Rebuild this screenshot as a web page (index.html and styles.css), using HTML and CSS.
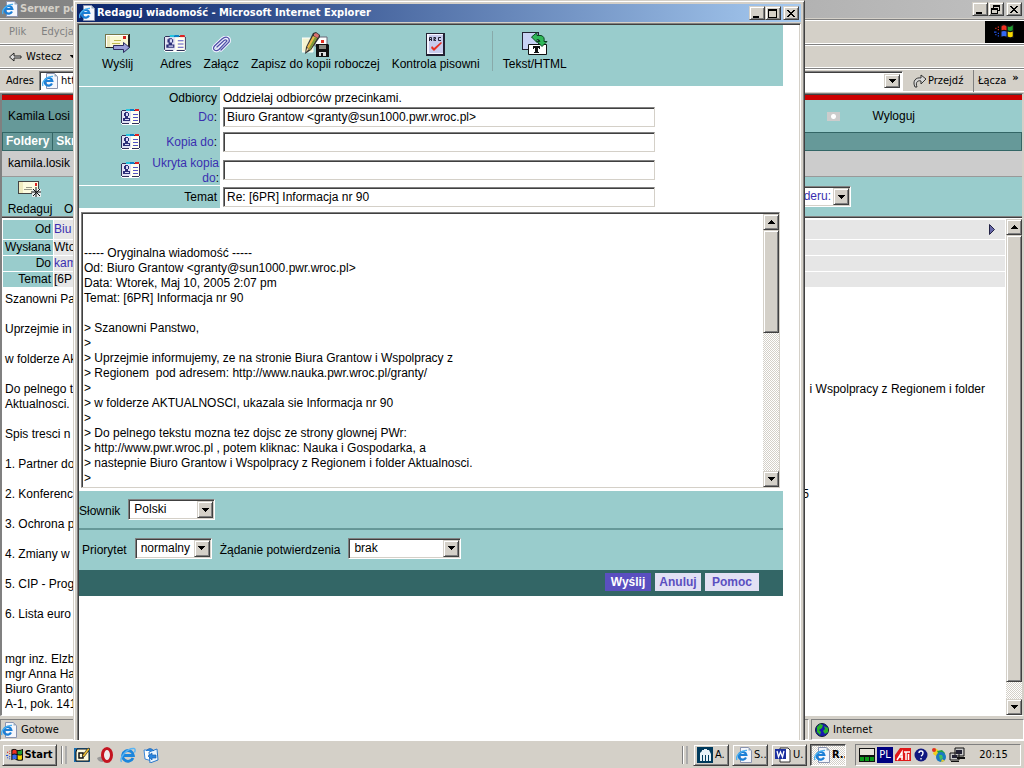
FILE: index.html
```html
<!DOCTYPE html>
<html lang="pl">
<head>
<meta charset="utf-8">
<title>Redaguj wiadomość</title>
<link rel="stylesheet" href="styles.css">
</head>
<body>
<svg class="defs" aria-hidden="true">
  <symbol id="ie" viewBox="0 0 16 16">
    <path d="M4.500 .5h8l3 3v12h-11z" fill="#f4f6fc" stroke="#8a94b0"/>
    <path d="M12.500 .5v3h3z" fill="#9ab"/>
    <path d="M10 10.500A3.800 3.800 0 1 1 10.300 8H4" fill="none" stroke="#1c7fd6" stroke-width="2.200"/>
    <path d="M1 13C-1 9 5 3 11 3.500" fill="none" stroke="#4ab0f0" stroke-width="1.300"/>
  </symbol>
  <symbol id="ie-bare" viewBox="0 0 16 16">
    <path d="M13 11A5.4 5.4 0 1 1 13.4 8.5H4" fill="none" stroke="#1c86dc" stroke-width="2.8"/>
    <path d="M1.500 15C-1 11 7 1 14 1.500q2 .5 .5 4" fill="none" stroke="#58b4f4" stroke-width="1.400"/>
  </symbol>
  <symbol id="down" viewBox="0 0 7 4"><path d="M0 0h7v1H6v1H5v1H4v1H3V3H2V2H1V1H0z"/></symbol>
  <symbol id="up" viewBox="0 0 7 4"><path d="M0 4h7V3H6V2H5V1H4V0H3v1H2v1H1v1H0z"/></symbol>
  <symbol id="min" viewBox="0 0 10 10"><path d="M1 7h6v2H1z"/></symbol>
  <symbol id="max" viewBox="0 0 10 10"><path d="M0 0h9v9H0zM1 2v6h7V2z" fill-rule="evenodd"/></symbol>
  <symbol id="restore" viewBox="0 0 10 10"><path d="M2 0h7v6H7V5h1V2H3v1H2zM0 3h7v6H0zM1 5v3h5V5z" fill-rule="evenodd"/></symbol>
  <symbol id="close" viewBox="0 0 10 10"><path d="M1 1h2v1h1v1h2V2h1V1h2v1H8v1H7v1H6v1h1v1h1v1h1v1H7V7H6V6H4v1H3v1H1V7h1V6h1V5h1V4H3V3H2V2H1z"/></symbol>
  <symbol id="card" viewBox="0 0 20 17">
    <path d="M1 2h18v13h-1v1H1v-1H0V3h1z" fill="#fff"/>
    <path d="M1 1h17v1H1zM0 2h1v12H0zM18 2h1v12h-1zM1 14h7v1H1zM11 14h7v1h-7z" fill="#30305a"/>
    <path d="M1 2h9v12H1z" fill="#e2e3f4"/><path d="M10 2h8v12h-8z" fill="#fffff0"/>
    <path d="M5 0h4v2H5z" fill="#26c6e0"/><path d="M9 0h4v2H9z" fill="#0a80c8"/><path d="M14 0h4v2h-4z" fill="#e02020"/>
    <path d="M4 3h3v1h1v3H7v2h2v3H2V9h2V7H3V4h1z" fill="#2c2f78"/>
    <path d="M5 4h2v3H5zM4 10h4v1H4z" fill="#d8daf5"/>
    <path d="M12 5h5v1h-5zM12 8h5v1h-5zM12 11h5v1h-5z" fill="#5455c4"/>
  </symbol>
  <symbol id="flag" viewBox="0 0 16 12">
    <path d="M5 1q3-2 5 0 3 1 6-1v11q-3 1-6 0-2-2-5 0z" fill="#111"/>
    <path d="M6 2q2-2 4 0v3q-2-1-4 0z" fill="#f03020"/><path d="M11 2q2 1 4-1v4q-2 1-4 0z" fill="#20a030"/>
    <path d="M6 6q2-1 4 0v4q-2-1-4 0z" fill="#3468f0"/><path d="M11 6q2 1 4 0v4q-2 1-4 0z" fill="#f8d800"/>
    <path d="M3 2h1v1H3zM3 4h1v1H3zM1 3h1v1H1z" fill="#e03020"/><path d="M3 7h1v1H3zM3 9h1v1H3zM1 8h1v1H1zM0 6h2v1H0z" fill="#2050e0"/>
  </symbol>
</svg>

<div class="desktop">
  <div class="workspace">
    <main class="browser">
      <header class="titlebar inactive">
        <svg class="ico16"><use href="#ie"/></svg><span class="title">Serwer po</span>
        <div class="winbtns">
          <button aria-label="Minimalizuj"><svg><use href="#min"/></svg></button><button aria-label="Przywróć"><svg><use href="#restore"/></svg></button><button class="x" aria-label="Zamknij"><svg><use href="#close"/></svg></button>
        </div>
      </header>
      <nav class="bar menu"><span>Plik</span><span>Edycja</span>
        <span class="brand"><svg viewBox="0 0 16 12"><use href="#flag"/></svg></span>
      </nav>
      <div class="bar tools">
        <svg class="back" viewBox="0 0 13 10"><path d="M.5 5 5 1v3h7v2H5v3z" fill="#ddd" stroke="#222"/></svg>
        <span>Wstecz</span><svg class="tri"><use href="#down"/></svg>
      </div>
      <div class="bar address">
        <label for="url">Adres</label>
        <div class="urlbox"><svg class="ico16"><use href="#ie"/></svg><input id="url" value="htt"><button class="arrow" aria-label="Lista adresów"><svg><use href="#down"/></svg></button></div>
        <button class="go"><svg viewBox="0 0 14 14"><path d="M2 13C-1 7 3 3 8 4V1l5 4-5 5V7C5 6 2 8 4 13z" fill="#d8d8d8" stroke="#333"/></svg>Przejdź</button>
        <span class="links">Łącza<b>»</b></span>
      </div>
      <section class="page">
        <div class="redline"></div>
        <div class="userbar"><span class="user">Kamila Losi</span><div class="userright"><i class="radio"></i><a href="#">Wyloguj</a></div></div>
        <div class="tabs"><b>Foldery</b><b>Skr</b></div>
        <div class="folder">kamila.losik</div>
        <div class="actions">
          <div class="compose"><svg viewBox="0 0 24 17"><path d="M0 0h21v13H0z" fill="#444"/><path d="M1 1h19v11H1z" fill="#fdfce0"/><path d="M1 1h4v11H1z" fill="#f0ecc0"/><path d="M17 2h2v3h-2z" fill="#d22"/><path d="M8 6h6v1H8zM6 8h10v1H6z" fill="#998"/><path d="M14 8h9v8h-9z" fill="#e6eded"/><path d="M18 6v10M13 11h10M15 8l7 7M22 8l-7 7" stroke="#111"/></svg>Redaguj</div>
          <span class="reply">O</span>
          <div class="combo moveto"><select aria-label="Przenieś do folderu"><option>deru:</option></select><span class="arrow"><svg><use href="#down"/></svg></span></div>
        </div>
        <div class="message">
          <div class="msgbody">
            <table class="heads">
              <tr><th>Od</th><td><a href="#">Biu</a><svg class="next" viewBox="0 0 6 11"><path d="M.5 .5 5.500 5.500 .5 10.500z" fill="#6667a8" stroke="#224"/></svg></td></tr>
              <tr><th>Wysłana</th><td>Wto</td></tr>
              <tr><th>Do</th><td><a href="#">kam</a></td></tr>
              <tr><th>Temat</th><td>[6P</td></tr>
            </table>
            <div class="letter">
              <p>Szanowni Pa</p>
              <p>Uprzejmie in</p>
              <p>w folderze Ak</p>
              <p class="split"><span>Do pelnego t<br>Aktualnosci.</span><span>i Wspolpracy z Regionem i folder</span></p>
              <p>Spis tresci n</p>
              <p>1. Partner do</p>
              <p class="split far"><span>2. Konferenc</span><span>5</span></p>
              <p>3. Ochrona p</p>
              <p>4. Zmiany w</p>
              <p>5. CIP - Prog</p>
              <p>6. Lista euro</p>
              <p class="sign">mgr inz. Elzb<br>mgr Anna Ha<br>Biuro Granto<br>A-1, pok. 141</p>
            </div>
          </div>
          <div class="scroll"><span class="sb"><svg><use href="#up"/></svg></span><span class="thumb long"></span><span class="track"></span><span class="sb"><svg><use href="#down"/></svg></span></div>
        </div>
      </section>
      <footer class="status">
        <div class="cell ready"><svg class="ico16"><use href="#ie"/></svg>Gotowe</div>
        <div class="cell zone"><svg viewBox="0 0 14 14"><circle cx="7" cy="7" r="6.500" fill="#1818b0" stroke="#123"/><path d="M2 4 5 1l3 1-1 3-3 2 2 2-1 3-3-3zM9 3l4 2v4l-3 2-2-3 2-2z" fill="#28b428"/></svg>Internet</div>
      </footer>
    </main>

    <section class="popup">
      <header class="titlebar active">
        <svg class="ico16"><use href="#ie"/></svg><span class="title">Redaguj wiadomość - Microsoft Internet Explorer</span>
        <div class="winbtns">
          <button aria-label="Minimalizuj"><svg><use href="#min"/></svg></button><button aria-label="Maksymalizuj"><svg><use href="#max"/></svg></button><button class="x" aria-label="Zamknij"><svg><use href="#close"/></svg></button>
        </div>
      </header>
      <form class="client">
        <div class="toolbar">
          <button type="button" class="wide"><svg width="26" height="20" viewBox="0 0 26 20"><path d="M0 0h25v14H0z" fill="#222"/><path d="M0 0h24v1H0zM0 0h1v14H0z" fill="#77774a"/><path d="M1 1h22v12H1z" fill="#fff"/><path d="M2 2h21v11H2z" fill="#f9f8d4"/><path d="M2 2h3v11H2z" fill="#ece8bc"/><path d="M18 2h3v3h-3z" fill="#d22020"/><path d="M9 6h7v1H9zM7 9h8v1H7z" fill="#c0bc50"/><path d="M8.500 11.500h10v-3l6 5-6 5v-3h-10z" fill="#9a9ed8" stroke="#2b2b60"/></svg>Wyślij</button>
          <button type="button"><svg width="23" height="18" viewBox="0 0 20 17" preserveAspectRatio="none"><use href="#card"/></svg>Adres</button>
          <button type="button"><svg width="20" height="17" viewBox="0 0 20 17"><g fill="none" stroke-linecap="round"><path id="clip" d="M6 11 13 4.500q2-1.500 3 .5L8 13.500q-2.500 2-4.500 .5t0-4L11 3q3-2.500 5.500-1.500T18 6l-8 8" stroke="#f0f0ff" stroke-width="3"/><use href="#clip"/><path d="M6 11 13 4.500q2-1.500 3 .5L8 13.500q-2.500 2-4.500 .5t0-4L11 3q3-2.500 5.500-1.500T18 6l-8 8" stroke="#5052a8" stroke-width="1.300"/></g></svg>Załącz</button>
          <button type="button"><svg width="27" height="25" viewBox="0 0 27 25"><path d="M0 6h11v14H0z" fill="#f5f4d0" stroke="#fff"/><path d="M13 5h12v9H13z" fill="#fff" stroke="#667"/><path d="M19 8h3v3h-3z" fill="#e03020"/><path d="M3 22l1-7L11 1l3-1 4 3v2L9 18z" fill="#333"/><path d="M5 15 11 4l4 2-7 12z" fill="#e8b848"/><path d="M7 16 13 5l2 1-7 12z" fill="#7a9a38"/><path d="M12 2l2-1 3 2-1 3-4-2z" fill="#d87070"/><path d="M4 20l1-4 2 1z" fill="#f8d8a0"/><path d="M14 12h12l1 1v12H14z" fill="#111"/><path d="M17 13h7v4h-7z" fill="#8a8a80"/><path d="M17 20h7v4h-7z" fill="#ddd"/><path d="M19 21h2v3h-2z" fill="#111"/></svg>Zapisz do kopii roboczej</button>
          <button type="button"><svg width="19" height="23" viewBox="0 0 19 23"><path d="M0 0h19v23H0z" fill="#223"/><path d="M1 1h16v20H1z" fill="#f4f4ff"/><path d="M3 2h14v18H3z" fill="#c8ccec"/><path d="M3.500 8V4.500h2V8M4 6.500h1M8 4.500h1.500V6H8.500v1.500H10M8 4v4M15 4.500h-2.500v3H15" fill="none" stroke="#223"/><path d="M5 15l3 3 8-8-1-1-7 6-2-2z" fill="#e83020"/></svg>Kontrola pisowni</button>
          <span class="sep"></span>
          <button type="button"><svg width="26" height="24" viewBox="0 0 26 24"><path d="M0 0h17v18H0z" fill="#223"/><path d="M1 1h15v16H1z" fill="#c8d2f4"/><path d="M6.500 12.500h18v10h-18z" fill="#fff" stroke="#111"/><path d="M11 14h7v3h-1v-1h-1v4h1v1h-5v-1h1v-4h-1v1h-1z" fill="#111"/><path d="M9.500 5 15 .5v3h4q4 1 3 6h3l-5 5-5-5h3q0-2-3-2v3z" fill="#2fb858" stroke="#0a4422"/></svg>Tekst/HTML</button>
        </div>
        <div class="fields">
          <div class="row first"><span class="lab">Odbiorcy</span><span class="hint">Oddzielaj odbiorców przecinkami.</span></div>
          <div class="row"><label class="lab" for="to"><svg class="card"><use href="#card"/></svg><a href="#">Do</a>:</label><input id="to" value="Biuro Grantow &lt;granty@sun1000.pwr.wroc.pl&gt;"></div>
          <div class="row mid"><label class="lab" for="cc"><svg class="card"><use href="#card"/></svg><a href="#">Kopia do</a>:</label><input id="cc"></div>
          <div class="row tall"><label class="lab" for="bcc"><svg class="card"><use href="#card"/></svg><span><a href="#">Ukryta kopia<br>do</a>:</span></label><input id="bcc"></div>
          <div class="row subject"><label class="lab" for="subj">Temat</label><input id="subj" value="Re: [6PR] Informacja nr 90"></div>
        </div>
        <div class="editor">
          <textarea aria-label="Treść wiadomości" wrap="off">


----- Oryginalna wiadomość -----
Od: Biuro Grantow &lt;granty@sun1000.pwr.wroc.pl&gt;
Data: Wtorek, Maj 10, 2005 2:07 pm
Temat: [6PR] Informacja nr 90

&gt; Szanowni Panstwo,
&gt;
&gt; Uprzejmie informujemy, ze na stronie Biura Grantow i Wspolpracy z
&gt; Regionem  pod adresem: http://www.nauka.pwr.wroc.pl/granty/
&gt;
&gt; w folderze AKTUALNOSCI, ukazala sie Informacja nr 90
&gt;
&gt; Do pelnego tekstu mozna tez dojsc ze strony glownej PWr:
&gt; http://www.pwr.wroc.pl , potem kliknac: Nauka i Gospodarka, a
&gt; nastepnie Biuro Grantow i Wspolpracy z Regionem i folder Aktualnosci.
&gt;</textarea>
          <div class="scroll"><span class="sb"><svg><use href="#up"/></svg></span><span class="thumb"></span><span class="track"></span><span class="sb"><svg><use href="#down"/></svg></span></div>
        </div>
        <div class="options">
          <div class="optrow dict"><label for="dict">Słownik</label><div class="combo c-dict"><select id="dict"><option>Polski</option></select><span class="arrow"><svg><use href="#down"/></svg></span></div></div>
          <div class="optrow prio"><label for="prio">Priorytet</label><div class="combo c-prio"><select id="prio"><option>normalny</option></select><span class="arrow"><svg><use href="#down"/></svg></span></div>
          <label for="conf">Żądanie potwierdzenia</label><div class="combo c-conf"><select id="conf"><option>brak</option></select><span class="arrow"><svg><use href="#down"/></svg></span></div></div>
        </div>
        <div class="buttons"><button type="button" class="send">Wyślij</button><button type="button">Anuluj</button><button type="button" class="help">Pomoc</button></div>
      </form>
    </section>
  </div>

  <footer class="taskbar">
    <button class="start"><svg viewBox="0 0 16 12"><use href="#flag"/></svg>Start</button>
    <span class="grip"></span>
    <div class="quick">
      <svg viewBox="0 0 16 16"><path d="M0 1h16v14H0z" fill="#1a6fb0"/><path d="M3 2h10l2 3v9H2V5z" fill="#fdfbe0" stroke="#111"/><path d="M5 6h4v5H5z" fill="none" stroke="#111" stroke-width="1.500"/><path d="M8 9l6-8 2 1-6 8z" fill="#f0c030" stroke="#222" stroke-width=".7"/></svg>
      <svg viewBox="0 0 16 16"><path d="M0 11q4-3 8 0l-2 4q-5 0-6-4z" fill="#999"/><ellipse cx="10" cy="8" rx="4.500" ry="6.500" fill="#eee" stroke="#c41420" stroke-width="3"/></svg>
      <svg><use href="#ie-bare"/></svg>
      <svg viewBox="0 0 16 16"><path d="M1 3h8v11l-7-2z" fill="#fff" stroke="#3a86d8"/><path d="M6 5l8-3 1 11-8 3z" fill="#e8f4ff" stroke="#2a76c8"/><path d="M3 4q4-5 8 0M5 9l4-3v2h4v3H9v2z" fill="#2a86e0" stroke="#1860b0" stroke-width=".7"/></svg>
    </div>
    <span class="grip tasksgrip"></span>
    <button class="task"><svg viewBox="0 0 16 16"><path d="M0 0h16v16H0z" fill="#003a5c"/><path d="M3 14V6l2-2V3h2V2h3v1h2l2 4v7h-2V8h-1v6H9V8H8v6H6V8H5v6z" fill="#e8f2f8"/></svg>A.</button>
    <button class="task"><svg><use href="#ie"/></svg>S..</button>
    <button class="task"><svg viewBox="0 0 16 16"><path d="M5 1h8l2 2v12H5z" fill="#fff" stroke="#333"/><path d="M0 2h11v10H0z" fill="#1a2fa0"/><path d="M2 4l1.500 6L5.500 5l2 5L9 4" fill="none" stroke="#fff" stroke-width="1.300"/></svg>U.</button>
    <button class="task on"><svg><use href="#ie"/></svg>R..</button>
    <div class="tray">
      <svg viewBox="0 0 16 16"><path d="M0 1h16v14H0z" fill="#111"/><path d="M1 2h14v6H1z" fill="#e8e4dc"/><path d="M1 10h4v4H1zM6 10h4v4H6zM11 10h4v4h-4z" fill="#0a9a1a"/></svg>
      <span class="lang">PL</span>
      <svg viewBox="0 0 16 16"><path d="M5 1h11v13H0V8z" fill="#e01818"/><path d="M2 13 7 5v8M4 10h4M9 5h6M11 5v8M13.500 7v6" stroke="#fff" stroke-width="1.500" fill="none"/></svg>
      <svg viewBox="0 0 16 16"><circle cx="8" cy="8" r="6.500" fill="#101880"/><path d="M6 6q0-2 2-2t2 2-2 3M8 11v1.500" fill="none" stroke="#fff" stroke-width="1.400"/></svg>
      <svg viewBox="0 0 16 16"><path d="M4 1l3 2 1 4-3 2-3-2z" fill="#f0d020"/><circle cx="3" cy="3" r="2" fill="#e03020"/><path d="M6 4l5-1 3 3-1 3-4 1z" fill="#20a040"/><circle cx="10" cy="10" r="5" fill="#1a7ac0"/><path d="M8 8h3l1 3-3 2z" fill="#40c060"/><path d="M11 12l3 2-4 1z" fill="#f0d020"/></svg>
      <svg viewBox="0 0 16 16"><path d="M6 1h9v8H6zM1 6h9v7H1z" fill="#c8c8c8" stroke="#111"/><path d="M7 3h6v4H7zM3 8h5v3H3z" fill="#223"/><path d="M2 14h8v1H2zM8 10h8v2H8z" fill="#111"/></svg>
      <time>20:15</time>
    </div>
  </footer>
</div>
</body>
</html>
```
FILE: styles.css
```css
:root {
  --face: #d4d0c8;
  --shadow: #808080;
  --dark: #404040;
  --teal: #99cccc;
  --teal2: #669999;
  --teal3: #336666;
  --link: #3a2fb0;
  --ui: "DejaVu Sans Condensed", "DejaVu Sans", sans-serif;
}
* { box-sizing: border-box; }
body {
  margin: 0;
  font: 12px/15px "Liberation Sans", Arial, sans-serif;
  color: #000;
}
button, input, select, textarea { font: inherit; color: inherit; margin: 0; padding: 0; border: 0; border-radius: 0; background: none; }
input, select, textarea { outline: 0; min-width: 0; }
a { color: inherit; text-decoration: none; }
svg { display: block; flex: none; }
.defs { position: absolute; width: 0; height: 0; }

.desktop { display: flex; flex-direction: column; height: 100vh; overflow: hidden; background: var(--face); }
.workspace { position: relative; flex: 1; min-height: 0; overflow: hidden; }
.browser { display: flex; flex-direction: column; height: 100%; background: var(--face); }
.ico16 { width: 16px; height: 16px; }

/* raised 3D edges */
.winbtns button, .arrow, .sb, .thumb, .start, .task {
  background: var(--face);
  border: 1px solid;
  border-color: var(--face) var(--dark) var(--dark) var(--face);
  box-shadow: inset 1px 1px #fff, inset -1px -1px var(--shadow);
}

.titlebar { display: flex; align-items: center; flex: none; height: 18px; font: bold 11px/18px var(--ui); color: #fff; padding-left: 2px; white-space: nowrap; }
.titlebar .title { margin-left: 2px; }
.inactive { color: var(--face); background: linear-gradient(90deg, #808080, #c0c0c0); }
.active { background: linear-gradient(90deg, #0a246a, #a6caf0); }
.winbtns { display: flex; margin-left: auto; padding-right: 2px; }
.winbtns button { width: 16px; height: 14px; padding: 1px 0 0 2px; }
.winbtns svg { width: 10px; height: 10px; }
.winbtns .x { margin-left: 2px; }

.bar { display: flex; align-items: center; flex: none; height: 24px; padding-top: 1px; font: 11px/14px var(--ui); border-top: 1px solid var(--shadow); border-bottom: 1px solid #fff; box-shadow: inset 0 1px #fff; }
.menu { height: 25px; color: var(--shadow); gap: 15px; padding-left: 9px; margin-top: 1px; }
.brand { margin-left: auto; width: 39px; height: 22px; background: #000; padding: 3px 9px; }
.brand svg { width: 20px; height: 15px; }
.tools { padding-left: 9px; gap: 4px; }
.back { width: 13px; height: 10px; }
.tri { width: 5px; height: 3px; margin-left: 4px; }
.address { padding-left: 6px; }
.address label { width: 33px; }
.urlbox { display: flex; align-items: center; flex: 1; height: 20px; padding: 2px; background: #fff; border: 1px solid; border-color: var(--shadow) #fff #fff var(--shadow); box-shadow: inset 1px 1px var(--dark); }
.urlbox input { flex: 1; margin-left: 3px; }
.arrow { display: flex; align-items: center; justify-content: center; flex: none; width: 16px; align-self: stretch; pointer-events: none; }
.arrow svg, .sb svg { width: 7px; height: 4px; }
.go { display: flex; align-items: center; gap: 1px; width: 70px; padding-left: 10px; }
.go svg { width: 14px; height: 14px; }
.links { display: flex; gap: 6px; width: 51px; height: 22px; padding: 4px 0 0 4px; border-left: 1px solid var(--shadow); }
.links b { line-height: 8px; }

.page { display: flex; flex-direction: column; flex: 1; min-height: 0; margin-top: 1px; border: 1px solid; border-color: var(--shadow) var(--face) #fff var(--shadow); border-width: 1px 2px 1px 2px; box-shadow: inset 0 1px var(--dark); padding-top: 1px; background: #fff; }
.redline { height: 5px; background: #c00; flex: none; }
.userbar { display: flex; flex: none; height: 32px; line-height: 32px; background: var(--teal2); }
.user { width: 300px; padding-left: 6px; }
.userright { display: flex; align-items: center; justify-content: flex-end; flex: 1; gap: 32px; padding-right: 107px; background: var(--teal); }
.radio { width: 13px; height: 9px; background: radial-gradient(circle, #fff 2px, #ccc 3px); }
.tabs { display: flex; flex: none; height: 19px; line-height: 17px; color: #fff; background: var(--teal2); border: 1px solid var(--teal3); }
.tabs b { padding: 0 3px; border-right: 1px solid var(--teal3); }
.folder { flex: none; height: 26px; line-height: 25px; padding-left: 6px; background: #ccc; border-bottom: 1px solid #999; }
.actions { display: flex; flex: none; height: 40px; padding: 4px 0 0 4px; background: var(--teal); border-bottom: 1px solid var(--shadow); }
.compose { display: flex; flex-direction: column; align-items: center; width: 48px; }
.compose svg { width: 24px; height: 17px; margin-bottom: 4px; }
.reply { margin: 21px 0 0 10px; }
.moveto { margin: 5px 171px 0 auto; width: 75px; color: var(--link); background: #e6e6e6; }
.message { display: flex; flex: 1; min-height: 0; border-top: 1px solid var(--dark); padding-top: 1px; }
.msgbody { flex: 1; min-width: 0; overflow: hidden; }
.heads { width: 100%; border-spacing: 1px; table-layout: fixed; }
.heads th { width: 50px; padding: 0 2px 0 0; text-align: right; font-weight: normal; background: var(--teal); }
.heads td { padding: 0; height: 15px; background: #e6e6e6; }
.heads tr:first-child td { height: 19px; }
.heads td a { color: var(--link); }
.next { float: right; width: 6px; height: 11px; margin: 2px 10px 0 0; }
.letter { padding: 4px 3px 0; white-space: nowrap; }
.letter p { margin: 0 0 15px; }
.split { display: flex; justify-content: space-between; padding-right: 18px; }
.far { padding-right: 194px; }
.letter .sign { margin-top: 30px; }
.status { display: flex; flex: none; height: 21px; margin-top: 3px; gap: 2px; font: 11px/18px var(--ui); }
.cell { display: flex; align-items: center; gap: 4px; height: 21px; border: 1px solid; border-color: var(--shadow) #fff #fff var(--shadow); }
.ready { flex: 1; }
.zone { width: 213px; padding-left: 3px; }
.zone svg { width: 14px; height: 14px; }

.scroll { display: flex; flex-direction: column; flex: none; width: 16px; }
.sb { display: flex; align-items: center; justify-content: center; flex: none; height: 16px; }
.thumb { flex: none; height: 103px; }
.thumb.long { flex: 26 0 0; height: auto; }
.track { flex: 1 0 0; background: repeating-conic-gradient(#fff 0 25%, var(--face) 0 50%) 0 0 / 2px 2px; }

/* compose window */
.popup { position: absolute; left: 73px; top: 0; bottom: -8px; width: 732px; display: flex; flex-direction: column; padding: 3px; background: var(--face); border: 1px solid; border-color: var(--face) var(--dark) var(--dark) var(--face); box-shadow: inset 1px 1px #fff, inset -1px -1px var(--shadow); }
.client { flex: 1; min-height: 0; margin-top: 1px; background: #fff; border: 1px solid; border-color: var(--shadow) #fff #fff var(--shadow); box-shadow: inset 1px 1px var(--dark), inset -1px 0 var(--face); padding: 1px 17px 0 1px; }
.toolbar { display: flex; height: 61px; padding: 6px 0 0 23px; background: var(--teal); white-space: nowrap; }
.toolbar button { display: flex; flex-direction: column; align-items: center; justify-content: space-between; height: 41px; margin-right: 12px; }
.toolbar .wide { margin-right: 27px; }
.toolbar button svg { margin: auto 0; }
.sep { width: 1px; height: 40px; margin-right: 10px; background: #8aa; }
.fields { padding-top: 1px; }
.row { display: flex; align-items: center; height: 22px; }
.lab { display: flex; align-items: center; justify-content: flex-end; align-self: stretch; width: 141px; margin-right: 3px; padding-right: 3px; text-align: right; background: var(--teal); }
.lab a { color: var(--link); }
.card { width: 20px; height: 17px; margin-right: auto; margin-left: 42px; }
.row input { width: 432px; height: 20px; padding: 1px 2px 1px 3px; border: 1px solid; border-color: var(--shadow) var(--face) var(--face) var(--shadow); box-shadow: inset 1px 1px var(--dark); }
.first { height: 19px; }
.first .lab, .hint { padding-top: 3px; }
.mid { height: 28px; }
.tall { height: 29px; }
.tall input { margin-bottom: 2px; }
.tall .lab { padding-right: 1px; }
.subject { height: 23px; border-top: 1px solid #fff; }
.editor { display: flex; height: 276px; margin: 4px 3px 0 2px; border: 1px solid; border-color: var(--shadow) var(--face) var(--face) var(--shadow); box-shadow: inset 1px 1px var(--dark); padding: 1px 0 0 1px; }
.editor textarea { flex: 1; resize: none; overflow: hidden; padding: 2px 1px; white-space: pre; }
.options { margin-top: 3px; background: var(--teal); }
.optrow { display: flex; align-items: center; gap: 8px; white-space: nowrap; }
.dict { height: 39px; border-bottom: 2px solid var(--teal2); }
.prio { height: 40px; padding: 0 0 4px 3px; }
.optrow label { padding-top: 4px; }
.combo { display: flex; height: 21px; padding: 1px; background: #fff; border: 1px solid; border-color: var(--shadow) #fff #fff var(--shadow); box-shadow: inset 1px 1px var(--dark), inset -1px -1px var(--face); }
.combo select { flex: 1; appearance: none; padding-left: 4px; }
.c-dict { width: 87px; }
.c-prio { width: 77px; }
.c-conf { width: 113px; }
.moveto select { padding: 0 2px 0 0; text-align: right; }
.buttons { display: flex; justify-content: flex-end; gap: 4px; height: 26px; padding: 3px 24px 0 0; background: var(--teal3); }
.buttons button { width: 46px; height: 18px; font-weight: bold; color: #5a4fc0; background: #e2e0f4; }
.buttons .send { color: #fff; background: #5a4fc0; }
.buttons .help { width: 54px; }

.taskbar { display: flex; align-items: center; flex: none; height: 28px; padding: 1px 3px 0 2px; border-top: 1px solid #fff; background: var(--face); font: 11px/16px var(--ui); }
.start { display: flex; align-items: center; justify-content: center; gap: 1px; width: 55px; height: 22px; font-weight: bold; }
.start svg { width: 17px; height: 14px; }
.grip { width: 6px; height: 18px; margin: 0 7px 0 4px; border-left: 1px solid var(--shadow); box-shadow: inset 1px 0 #fff; border-right: 2px outset #fff; }
.quick { display: flex; gap: 7px; }
.quick svg, .tray svg, .task svg { width: 16px; height: 16px; }
.tasksgrip { margin: 0 5px 0 auto; }
.task { display: flex; align-items: center; gap: 2px; width: 36px; height: 22px; margin-right: 3px; padding-left: 3px; overflow: hidden; white-space: nowrap; }
.task.on { font-weight: bold; border-color: var(--dark) #fff #fff var(--dark); box-shadow: inset 1px 1px var(--shadow); background: repeating-conic-gradient(#fff 0 25%, var(--face) 0 50%) 0 0 / 2px 2px; }
.tray { display: flex; align-items: center; gap: 2px; width: 166px; height: 22px; margin-left: 6px; padding-left: 3px; border: 1px solid; border-color: var(--shadow) #fff #fff var(--shadow); }
.lang { width: 16px; height: 16px; color: #fff; background: #000080; text-align: center; }
.tray time { margin: 0 auto; }
```
